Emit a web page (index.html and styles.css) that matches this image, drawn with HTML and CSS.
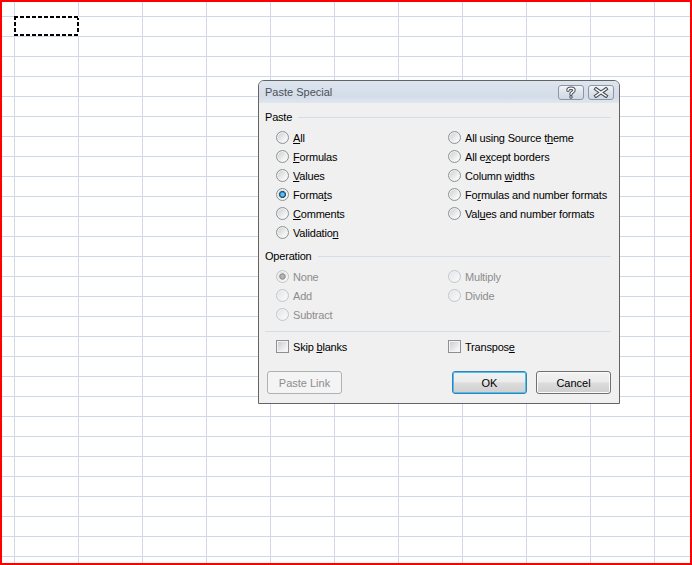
FILE: index.html
```html
<!DOCTYPE html>
<html>
<head>
	<title>Paste Special</title>
	<link rel="stylesheet" href="styles.css">
</head>
<body>

	<div class="sheet">
		<div class="marquee"></div>

		<div class="dialog">
			<div class="titlebar">
				<span class="title">Paste Special</span>
				<div class="caption-btns">
					<span class="cbtn">
						<svg width="14" height="13" viewBox="0 0 14 13">
							<path d="M4 4.2 C4 1.5, 10 1.5, 10 4.2 C10 6.2, 7 6.2, 7 8.2" fill="none" stroke="#4a4f57" stroke-width="3.4" stroke-linecap="round"/>
							<circle cx="7" cy="11" r="1.7" fill="#4a4f57"/>
							<path d="M4 4.2 C4 1.5, 10 1.5, 10 4.2 C10 6.2, 7 6.2, 7 8.2" fill="none" stroke="#fff" stroke-width="1.4" stroke-linecap="round"/>
							<circle cx="7" cy="11" r="0.7" fill="#fff"/>
						</svg>
					</span>
					<span class="cbtn">
						<svg width="16" height="11" viewBox="0 0 16 11">
							<path d="M3 2 L13 9 M13 2 L3 9" stroke="#4a4f57" stroke-width="3.6" stroke-linecap="square"/>
							<path d="M3 2 L13 9 M13 2 L3 9" stroke="#fff" stroke-width="1.5" stroke-linecap="square"/>
						</svg>
					</span>
				</div>
			</div>

			<div class="body">
				<div class="group-head">Paste</div>
				<div class="options six">
					<div class="opt"><span class="radio"></span><span><u>A</u>ll</span></div>
					<div class="opt"><span class="radio"></span><span><u>F</u>ormulas</span></div>
					<div class="opt"><span class="radio"></span><span><u>V</u>alues</span></div>
					<div class="opt"><span class="radio checked"></span><span>Forma<u>t</u>s</span></div>
					<div class="opt"><span class="radio"></span><span><u>C</u>omments</span></div>
					<div class="opt"><span class="radio"></span><span>Validatio<u>n</u></span></div>
					<div class="opt"><span class="radio"></span><span>All using Source t<u>h</u>eme</span></div>
					<div class="opt"><span class="radio"></span><span>All e<u>x</u>cept borders</span></div>
					<div class="opt"><span class="radio"></span><span>Column <u>w</u>idths</span></div>
					<div class="opt"><span class="radio"></span><span>Fo<u>r</u>mulas and number formats</span></div>
					<div class="opt"><span class="radio"></span><span>Val<u>u</u>es and number formats</span></div>
				</div>

				<div class="group-head op">Operation</div>
				<div class="options three">
					<div class="opt off"><span class="radio checked"></span><span>None</span></div>
					<div class="opt off"><span class="radio"></span><span>Add</span></div>
					<div class="opt off"><span class="radio"></span><span>Subtract</span></div>
					<div class="opt off"><span class="radio"></span><span>Multiply</span></div>
					<div class="opt off"><span class="radio"></span><span>Divide</span></div>
				</div>

				<div class="sep"></div>

				<div class="options checks">
					<div class="opt"><span class="check"></span><span>Skip <u>b</u>lanks</span></div>
					<div class="opt"><span class="check"></span><span>Transpos<u>e</u></span></div>
				</div>

				<div class="buttons">
					<button class="btn disabled">Paste Link</button>
					<div class="right-btns">
						<button class="btn default">OK</button>
						<button class="btn">Cancel</button>
					</div>
				</div>
			</div>
		</div>
	</div>

</body>
</html>
```

FILE: styles.css
```css
	*{
		box-sizing: border-box;
	}

	body{
		margin: 0;
		background: #fff;
		font-family: "Liberation Sans", Arial, sans-serif;
		font-size: 11px;
	}

	.sheet{
		position: relative;
		width: 692px;
		height: 565px;
		border: 2px solid #ff0000;
		padding: 14px 0 0 12px;
		background-image:
			linear-gradient(to right, #d0d7e5 1px, transparent 1px),
			linear-gradient(to bottom, #d0d7e5 1px, transparent 1px);
		background-size: 64px 20px;
		background-position: 12px 14px;
	}

	.marquee{
		width: 65px;
		height: 20px;
		background:
			repeating-linear-gradient(90deg, #000 0 4px, #fff 4px 6px) top / 100% 2px no-repeat,
			repeating-linear-gradient(90deg, #000 0 4px, #fff 4px 6px) bottom / 100% 2px no-repeat,
			repeating-linear-gradient(180deg, #000 0 4px, #fff 4px 6px) left / 2px 100% no-repeat,
			repeating-linear-gradient(180deg, #000 0 4px, #fff 4px 6px) right / 2px 100% no-repeat;
	}

	/* dialog window */
	.dialog{
		position: absolute;
		left: 256px;
		top: 78px;
		width: 362px;
		height: 324px;
		border: 1px solid #646464;
		border-radius: 6px 6px 0 0;
		background: #f0f0f0;
		overflow: hidden;
		letter-spacing: -0.2px;
	}

	.titlebar{
		height: 22px;
		display: flex;
		align-items: flex-start;
		justify-content: space-between;
		padding: 4px 5px 0 6px;
		background: linear-gradient(#dde5ef, #d3dce8 70%, #dfe6ee);
	}

	.title{
		color: #4b5057;
		line-height: 15px;
		letter-spacing: 0;
	}

	.caption-btns{
		display: flex;
		gap: 4px;
	}

	.cbtn{
		width: 26px;
		height: 15px;
		border: 1px solid #8d96a2;
		border-radius: 3px;
		background: linear-gradient(#f3f5f8, #dde3ea 50%, #d0d8e2);
		display: flex;
		align-items: center;
		justify-content: center;
	}

	.body{
		padding: 7px 8px 9px 6px;
	}

	.group-head{
		height: 14px;
		line-height: 14px;
		display: flex;
		align-items: center;
		color: #000;
	}

	.group-head::after{
		content: "";
		flex: 1;
		height: 1px;
		margin-left: 6px;
		background: #d5dde7;
	}

	.group-head.op{
		margin-top: 7px;
	}

	.options{
		margin-top: 4px;
		padding-left: 11px;
		display: grid;
		grid-template-columns: 172px 1fr;
		grid-auto-flow: column;
		grid-auto-rows: 19px;
	}

	.options.six{
		grid-template-rows: repeat(6, 19px);
	}

	.options.three{
		grid-template-rows: repeat(3, 19px);
	}

	.options.checks{
		margin-top: 5px;
		grid-template-rows: 19px;
	}

	.opt{
		display: flex;
		align-items: center;
		gap: 4px;
		color: #000;
		white-space: nowrap;
	}

	.opt.off{
		color: #8d8d8d;
	}

	.radio{
		width: 13px;
		height: 13px;
		border-radius: 50%;
		border: 1px solid #8f9294;
		background: linear-gradient(135deg, #c9cbce, #f7f7f7 75%);
		box-shadow: inset 0 0 0 1px #f2f2f2;
	}

	.radio.checked{
		background:
			radial-gradient(circle, #5cc2f2 0 1.5px, #1d6fa4 2.5px, #334b5e 3.3px, transparent 3.8px),
			linear-gradient(135deg, #c9cbce, #f7f7f7 75%);
	}

	.off .radio{
		border-color: #c2c6cb;
		background: linear-gradient(135deg, #dfe3e8, #f6f6f6 75%);
	}

	.off .radio.checked{
		background:
			radial-gradient(circle, #b4b4b4 0 1.5px, #8a8a8a 2.7px, transparent 3.6px),
			linear-gradient(135deg, #d8d8d8, #f6f6f6 75%);
	}

	.check{
		width: 13px;
		height: 13px;
		border: 1px solid #8f8f8f;
		background: linear-gradient(135deg, #c5c9cf, #f5f5f5 80%);
		box-shadow: inset 0 0 0 1px #f4f4f4;
	}

	.sep{
		margin-top: 7px;
		height: 1px;
		background: #d5dde7;
	}

	.buttons{
		margin-top: 15px;
		padding-left: 2px;
		display: flex;
		justify-content: space-between;
	}

	.right-btns{
		display: flex;
		gap: 9px;
	}

	.btn{
		width: 75px;
		height: 23px;
		padding: 0;
		font-family: inherit;
		font-size: 11px;
		letter-spacing: 0;
		color: #000;
		border: 1px solid #707070;
		border-radius: 3px;
		background: linear-gradient(#f2f2f2, #ebebeb 48%, #dcdcdc 52%, #cfcfcf);
		box-shadow: inset 0 0 0 1px #fbfbfb;
	}

	.btn.default{
		border-color: #3c7fb1;
		box-shadow: inset 0 0 0 1px #48c0f0;
	}

	.btn.disabled{
		color: #8d8d8d;
		border-color: #adb2b5;
		background: #f4f4f4;
		box-shadow: none;
	}
```
